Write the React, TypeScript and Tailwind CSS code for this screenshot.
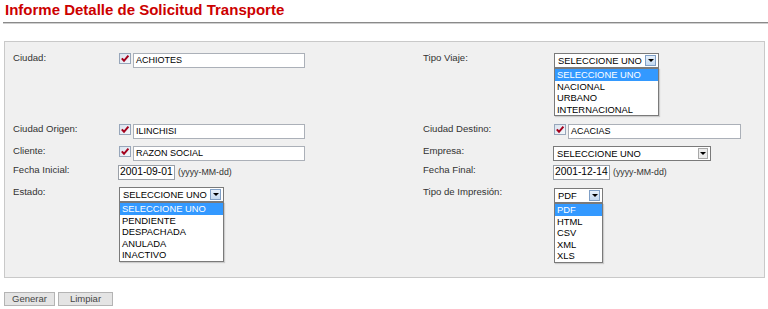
import React from 'react';

const LABEL = 'text-[9.6px] leading-[9px] text-[#333]';

function Check() {
  return (
    <svg width="12" height="11" viewBox="0 0 12 11" className="shrink-0">
      <defs>
        <linearGradient id="cbg" x1="0" y1="0" x2="1" y2="1">
          <stop offset="0" stopColor="#d9e2ee" />
          <stop offset="1" stopColor="#f6f8fb" />
        </linearGradient>
      </defs>
      <rect x="0.5" y="0.5" width="11" height="10" fill="url(#cbg)" stroke="#97a6ba" />
      <path d="M2.8 5.4 L5 7.8 L9.4 2.6" fill="none" stroke="#a3001b" strokeWidth="2" />
    </svg>
  );
}

function Arrow({ active }: { active: boolean }) {
  return (
    <div
      className={
        active
          ? 'flex h-[11px] w-[11px] items-center justify-center border border-[#7f9fc6] bg-[linear-gradient(#e6f0fb,#c4d9f0)]'
          : 'flex h-[11px] w-[10px] items-center justify-center border border-[#a8a8a8] bg-[#ececec]'
      }
    >
      <div className="h-0 w-0 border-x-[3px] border-t-[3px] border-x-transparent border-t-black" />
    </div>
  );
}

function Select({
  value,
  w,
  active = false,
  options,
}: {
  value: string;
  w: string;
  active?: boolean;
  options?: string[];
}) {
  return (
    <div className={`flex flex-col ${w}`}>
      <div className="flex h-[15px] items-center border border-[#7a7a7a] bg-white pl-[3px] pr-[2px]">
        <span className="flex-1 whitespace-nowrap text-[9.4px] leading-none text-black">{value}</span>
        <Arrow active={active} />
      </div>
      {options && (
        <div className="border border-[#7a7a7a] bg-white shadow-[1px_1px_1px_rgba(0,0,0,0.15)]">
          {options.map((o, i) => (
            <div
              key={o}
              className={
                i === 0
                  ? 'h-[11.6px] whitespace-nowrap bg-[#3399ff] pl-[2px] text-[9.4px] leading-[11.6px] text-white'
                  : 'h-[11.6px] whitespace-nowrap pl-[2px] text-[9.4px] leading-[11.6px] text-black'
              }
            >
              {o}
            </div>
          ))}
        </div>
      )}
    </div>
  );
}

function CheckInput({ value, w }: { value: string; w: string }) {
  return (
    <div className="ml-[1px] flex items-start gap-[2px]">
      <Check />
      <div className={`flex h-[15px] items-center border border-[#abb0b8] bg-white pl-[2px] ${w}`}>
        <span className="text-[9px] leading-none text-black">{value}</span>
      </div>
    </div>
  );
}

function DateInput({ value }: { value: string }) {
  return (
    <div className="flex items-center">
      <div className="flex h-[15px] w-[57px] items-center border border-[#9aa0a8] bg-white pl-[1px]">
        <span className="text-[10.3px] leading-none text-black">{value}</span>
      </div>
      <span className="ml-[3px] text-[8.8px] leading-none text-[#333]">(yyyy-MM-dd)</span>
    </div>
  );
}

export default function App() {
  const SEL = 'SELECCIONE UNO';

  return (
    <div className="w-[768px] bg-white pl-[4px] font-['Liberation_Sans',Arial,sans-serif]">
      <h1 className="pl-[1px] pt-[1px] text-[15px] font-bold leading-[18px] text-[#cc0000]">
        Informe Detalle de Solicitud Transporte
      </h1>
      <div className="-ml-[1px] mt-[3px] h-[2px] border-t border-b border-t-[#8a8a8a] border-b-[#cfcfcf]" />

      <div className="mt-[17px] w-[761px] border border-[#c9c9c9] bg-[#f0f0f0] pb-[14px] pl-[8px] pt-[11px]">
        <div className="grid h-[71px] grid-cols-[105px_305px_130px_1fr] items-start">
          <div className={LABEL}>Ciudad:</div>
          <CheckInput value="ACHIOTES" w="w-[172px]" />
          <div className={LABEL}>Tipo Viaje:</div>
          <div className="ml-[1px]">
            <Select value={SEL} w="w-[105px]" active options={[SEL, 'NACIONAL', 'URBANO', 'INTERNACIONAL']} />
          </div>
        </div>

        <div className="grid h-[22px] grid-cols-[105px_305px_130px_1fr] items-start">
          <div className={LABEL}>Ciudad Origen:</div>
          <CheckInput value="ILINCHISI" w="w-[172px]" />
          <div className={LABEL}>Ciudad Destino:</div>
          <CheckInput value="ACACIAS" w="w-[173px]" />
        </div>

        <div className="grid h-[19px] grid-cols-[105px_305px_130px_1fr] items-start">
          <div className={LABEL}>Cliente:</div>
          <CheckInput value="RAZON SOCIAL" w="w-[172px]" />
          <div className={LABEL}>Empresa:</div>
          <Select value={SEL} w="w-[158px]" />
        </div>

        <div className="grid h-[22px] grid-cols-[105px_305px_130px_1fr] items-start">
          <div className={LABEL}>Fecha Inicial:</div>
          <DateInput value="2001-09-01" />
          <div className={LABEL}>Fecha Final:</div>
          <DateInput value="2001-12-14" />
        </div>

        <div className="grid grid-cols-[105px_305px_130px_1fr] items-start">
          <div className={LABEL}>Estado:</div>
          <div className="ml-[1px]">
            <Select
              value={SEL}
              w="w-[105px]"
              active
              options={[SEL, 'PENDIENTE', 'DESPACHADA', 'ANULADA', 'INACTIVO']}
            />
          </div>
          <div className={LABEL}>Tipo de Impresión:</div>
          <div className="ml-[1px] pt-[1px]">
            <Select value="PDF" w="w-[49px]" active options={['PDF', 'HTML', 'CSV', 'XML', 'XLS']} />
          </div>
        </div>
      </div>

      <div className="mt-[14px] flex gap-[3px] pb-[3px]">
        <button className="h-[14px] w-[51px] border border-[#b4b4b4] bg-[#e4e4e4] text-[9.5px] leading-none text-[#444]">
          Generar
        </button>
        <button className="h-[14px] w-[55px] border border-[#b4b4b4] bg-[#e4e4e4] text-[9.5px] leading-none text-[#444]">
          Limpiar
        </button>
      </div>
    </div>
  );
}
